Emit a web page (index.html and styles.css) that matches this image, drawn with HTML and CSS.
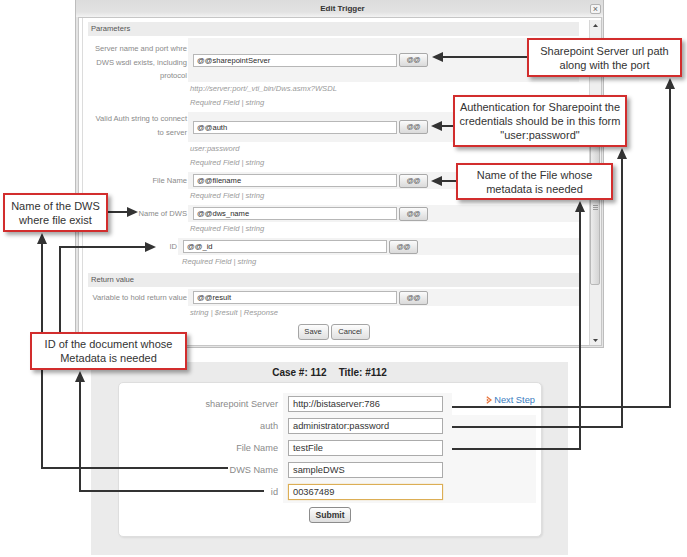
FILE: index.html
```html
<!DOCTYPE html>
<html>
<head>
<meta charset="utf-8">
<title>Edit Trigger</title>
<link rel="stylesheet" href="styles.css">
</head>
<body>
<div class="page">
  <div class="dialog">
    <div class="titlebar"><span></span><span class="title">Edit Trigger</span><span class="close">×</span></div>
    <div class="frame">
      <div class="content">
        <div class="sec-head">Parameters</div>
        <div class="param">
          <div class="plabel l3">Server name and port whre<br>DWS wsdl exists, including<br>protocol</div>
          <div class="pval"><span class="tin">@@sharepointServer</span><span class="atbtn">@@</span></div>
        </div>
        <div class="hints"><i>http://server:port/_vti_bin/Dws.asmx?WSDL</i><i>Required Field | string</i></div>
        <div class="param">
          <div class="plabel l2">Valid Auth string to connect<br>to server</div>
          <div class="pval"><span class="tin">@@auth</span><span class="atbtn">@@</span></div>
        </div>
        <div class="hints"><i>user:password</i><i>Required Field | string</i></div>
        <div class="param">
          <div class="plabel l1">File Name</div>
          <div class="pval"><span class="tin">@@filename</span><span class="atbtn">@@</span></div>
        </div>
        <div class="hints"><i>Required Field | string</i></div>
        <div class="param">
          <div class="plabel l1">Name of DWS</div>
          <div class="pval"><span class="tin">@@dws_name</span><span class="atbtn">@@</span></div>
        </div>
        <div class="hints"><i>Required Field | string</i></div>
        <div class="param shift">
          <div class="plabel l1">ID</div>
          <div class="pval"><span class="tin">@@_id</span><span class="atbtn">@@</span></div>
        </div>
        <div class="hints shift"><i>Required Field | string</i></div>
        <div class="sec-head second">Return value</div>
        <div class="param">
          <div class="plabel l1">Variable to hold return value</div>
          <div class="pval"><span class="tin">@@result</span><span class="atbtn">@@</span></div>
        </div>
        <div class="hints"><i>string | $result | Response</i></div>
        <div class="actions"><span class="btn save">Save</span><span class="btn cancel">Cancel</span></div>
      </div>
      <div class="scrollbar">
        <div class="sb-btn"><svg width="5" height="3" viewBox="0 0 5 3"><path d="M0 3 L2.5 0 L5 3 Z" fill="#444"/></svg></div>
        <div class="sb-track">
          <div class="sb-thumb"><svg width="5" height="5" viewBox="0 0 5 5"><path d="M0 0.5H5M0 2.5H5M0 4.5H5" stroke="#999" stroke-width="1"/></svg></div>
        </div>
        <div class="sb-btn"><svg width="5" height="3" viewBox="0 0 5 3"><path d="M0 0 L2.5 3 L5 0 Z" fill="#444"/></svg></div>
      </div>
    </div>
  </div>

  <div class="panel">
    <div class="case"><span>Case #: 112</span><span class="case-title">Title: #112</span></div>
    <div class="card">
      <div class="lform">
        <div class="llabel">sharepoint Server</div>
        <div class="lcell"><span class="lin">http://bistaserver:786</span></div>
        <div class="lnext first"><svg class="ns-icon" width="6" height="8" viewBox="0 0 6 8"><path d="M0.8 0.8 L5 4 L0.8 7.2" fill="none" stroke="#e8743b" stroke-width="1.3"/><path d="M0.8 2.5 L3 4 L0.8 5.5 Z" fill="#e8743b"/></svg><span class="ns-text">Next Step</span></div>
        <div class="llabel">auth</div>
        <div class="lcell"><span class="lin">administrator:password</span></div>
        <div class="lnext"></div>
        <div class="llabel">File Name</div>
        <div class="lcell"><span class="lin">testFile</span></div>
        <div class="lnext"></div>
        <div class="llabel">DWS Name</div>
        <div class="lcell"><span class="lin">sampleDWS</span></div>
        <div class="lnext"></div>
        <div class="llabel">id</div>
        <div class="lcell"><span class="lin focus">00367489</span></div>
        <div class="lnext"></div>
      </div>
      <div class="submit-row"><span class="submit">Submit</span></div>
    </div>
  </div>

  <svg class="overlay" width="687" height="557" viewBox="0 0 687 557">
    <g fill="none" stroke="#333" stroke-width="2">
      <path d="M527 57 H441"/>
      <path d="M453 126 H440"/>
      <path d="M457 181 H440"/>
      <path d="M108 212 H128"/>
      <path d="M60 333 V247 H146"/>
      <path d="M42 242 V468 H228"/>
      <path d="M80 380 V491 H264"/>
      <path d="M452 407 H670 V87"/>
      <path d="M452 427 H622 V157"/>
      <path d="M452 449 H580 V210"/>
    </g>
    <g fill="#333">
      <polygon points="432,57 443,52 443,62"/>
      <polygon points="431,126 442,121 442,131"/>
      <polygon points="431,181 442,176 442,186"/>
      <polygon points="138,212 127,207 127,217"/>
      <polygon points="156,247 145,242 145,252"/>
      <polygon points="42,233 37,244 47,244"/>
      <polygon points="80,371 75,382 85,382"/>
      <polygon points="670,78 665,89 675,89"/>
      <polygon points="622,148 617,159 627,159"/>
      <polygon points="580,201 575,212 585,212"/>
    </g>
  </svg>

  <div class="callout c1">Sharepoint Server url path<br>along with the port</div>
  <div class="callout c2">Authentication for Sharepoint the<br>credentials should be in this form<br>"user:password"</div>
  <div class="callout c3">Name of the File whose<br>metadata is needed</div>
  <div class="callout c4">Name of the DWS<br>where file exist</div>
  <div class="callout c5">ID of the document whose<br>Metadata is needed</div>
</div>
</body>
</html>
```

FILE: styles.css
```css
* { box-sizing: border-box; }
html, body { margin: 0; padding: 0; background: #fff; }
body {
  width: 687px;
  height: 557px;
  overflow: hidden;
  font-family: "Liberation Sans", Arial, sans-serif;
}
.page { position: relative; width: 687px; height: 557px; }

/* ---------- dialog ---------- */
.dialog {
  margin-left: 75px;
  width: 529px;
  height: 348px;
  border: 1px solid #bdbdbd;
  border-top: 0;
  background: #e4e4e4;
  display: flex;
  flex-direction: column;
}
.titlebar {
  height: 17px;
  flex: none;
  display: grid;
  grid-template-columns: 1fr auto 1fr;
  align-items: center;
  padding: 0 2px 0 8px;
  background: linear-gradient(#dcdcdc, #e2e2e2 70%, #f3f3f3);
}
.title { font-weight: bold; font-size: 8px; color: #333; }
.close {
  justify-self: end;
  width: 11px;
  height: 10px;
  border: 1px solid #b2b2b2;
  border-radius: 2px;
  background: #f4f4f4;
  font-size: 9px;
  line-height: 8px;
  text-align: center;
  color: #666;
}
.frame {
  flex: 1;
  margin: 0 1px 1px 2px;
  border: 1px solid #c6c6c6;
  background: #fff;
  display: flex;
}
.content {
  flex: 1;
  margin-left: 3px;
  border-left: 1px solid #dcdcdc;
  padding: 4px 10px 0 5px;
}
.sec-head {
  height: 14px;
  background: #ececec;
  font-size: 7.6px;
  line-height: 14px;
  color: #555;
  padding-left: 3px;
}
.sec-head.second { margin-top: 4px; }
.param {
  display: grid;
  grid-template-columns: 100px 1fr;
  margin-top: 2px;
}
.param.shift { grid-template-columns: 90px 1fr; }
.plabel {
  text-align: right;
  color: #8a8a8a;
  font-size: 7.6px;
  white-space: nowrap;
  padding-right: 1px;
}
.plabel.l3 { line-height: 13.5px; padding-top: 4px; height: 44px; }
.plabel.l2 { line-height: 14px; height: 30px; }
.plabel.l1 { line-height: 17px; height: 17px; }
.pval {
  background: #f3f3f3;
  display: flex;
  align-items: center;
  gap: 2px;
  padding-left: 5px;
}
.tin {
  width: 204px;
  height: 13px;
  border: 1px solid #b7b7b7;
  background: #fff;
  font-size: 7.6px;
  line-height: 11px;
  padding-left: 3px;
  color: #2a2a2a;
  white-space: nowrap;
}
.atbtn {
  width: 29px;
  height: 14px;
  border: 1px solid #a9a9a9;
  border-radius: 2px;
  background: linear-gradient(#fbfbfb, #dadada);
  font-size: 7px;
  font-weight: bold;
  color: #555;
  text-align: center;
  line-height: 12px;
}
.hints {
  display: flex;
  flex-direction: column;
  padding-left: 102px;
}
.hints.shift { padding-left: 94px; }
.hints i {
  font-size: 7.6px;
  line-height: 14px;
  color: #9a9a9a;
  white-space: nowrap;
}
.actions {
  display: flex;
  justify-content: center;
  gap: 2px;
  margin-top: 4px;
}
.btn {
  height: 16px;
  border: 1px solid #a5a5a5;
  border-radius: 3px;
  background: linear-gradient(#fdfdfd, #e0e0e0);
  font-size: 7.6px;
  color: #333;
  line-height: 14px;
  text-align: center;
}
.btn.save { width: 31px; }
.btn.cancel { width: 39px; }

.scrollbar {
  width: 12px;
  flex: none;
  margin-top: 2px;
  display: flex;
  flex-direction: column;
  background: #efefef;
  border-left: 1px solid #d6d6d6;
}
.sb-btn {
  height: 10px;
  flex: none;
  display: flex;
  align-items: center;
  justify-content: center;
}
.sb-track { flex: 1; }
.sb-thumb {
  margin: 100px 1px 0 0;
  height: 155px;
  border: 1px solid #b8b8b8;
  border-radius: 2px;
  background: linear-gradient(90deg, #ececec, #d4d4d4);
  display: flex;
  align-items: center;
  justify-content: center;
}

/* ---------- lower panel ---------- */
.panel {
  margin: 14px 0 0 91px;
  width: 477px;
  height: 193px;
  background: #ebebeb;
  padding-top: 4px;
}
.case {
  text-align: center;
  font-weight: bold;
  font-size: 10px;
  line-height: 14px;
  color: #222;
}
.case-title { margin-left: 12px; }
.card {
  margin: 2px 0 0 27px;
  width: 424px;
  height: 155px;
  background: #fff;
  border: 1px solid #dedede;
  border-radius: 5px;
  box-shadow: 1px 1px 2px rgba(0, 0, 0, 0.08);
  padding: 10px 3px 0 3px;
}
.lform {
  display: grid;
  grid-template-columns: 161px 169px 84px;
  grid-auto-rows: 22px;
}
.llabel {
  text-align: right;
  padding-right: 5px;
  font-size: 9.2px;
  line-height: 22px;
  color: #8a8a8a;
  white-space: nowrap;
}
.lcell { background: #f7f7f7; padding: 3px 0 0 5px; }
.lnext { background: #f7f7f7; }
.lnext.first {
  background: #fff;
  display: flex;
  justify-content: flex-end;
  align-items: center;
  gap: 2px;
  height: 14px;
  padding-right: 1px;
}
.ns-text { font-size: 9.3px; line-height: 14px; color: #3b7dc0; }
.lin {
  display: block;
  width: 155px;
  height: 16px;
  border: 1px solid #ababab;
  background: #fff;
  font-size: 9.3px;
  line-height: 14px;
  padding-left: 4px;
  color: #333;
  white-space: nowrap;
}
.lin.focus { border-color: #dcae55; box-shadow: 0 0 1px #e6c47c; }
.submit-row { display: flex; justify-content: center; margin-top: 4px; }
.submit {
  width: 42px;
  height: 16px;
  border: 1px solid #8c8c8c;
  border-radius: 3px;
  background: linear-gradient(#fefefe, #dedede);
  font-size: 8.6px;
  font-weight: bold;
  line-height: 14px;
  text-align: center;
  color: #333;
}

/* ---------- annotations ---------- */
.overlay { position: absolute; left: 0; top: 0; z-index: 1; }
.callout {
  position: absolute;
  z-index: 2;
  background: #fff;
  border: 2px solid #d22d2d;
  box-shadow: 3px 3px 4px rgba(0, 0, 0, 0.35);
  display: flex;
  align-items: center;
  justify-content: center;
  text-align: center;
  font-size: 11px;
  line-height: 14px;
  color: #333;
  white-space: nowrap;
}
.c1 { left: 527px; top: 38px; width: 155px; height: 39px; }
.c2 { left: 453px; top: 95px; width: 174px; height: 52px; }
.c3 { left: 456px; top: 163px; width: 157px; height: 37px; }
.c4 { left: 3px; top: 193px; width: 105px; height: 39px; }
.c5 { left: 30px; top: 332px; width: 157px; height: 38px; }
```
